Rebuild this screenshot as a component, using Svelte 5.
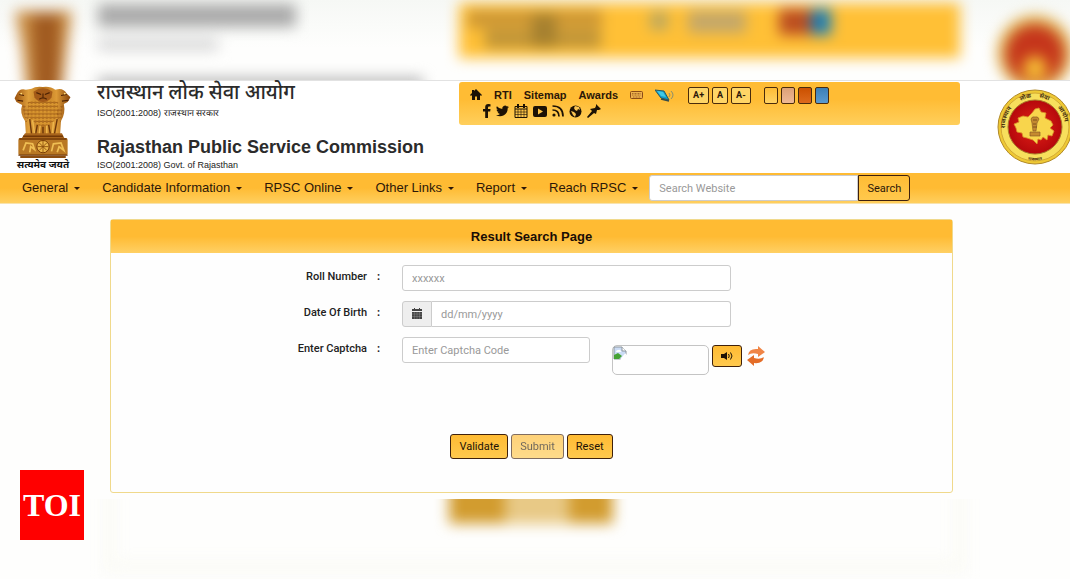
<script>
    let menu = [
        "General",
        "Candidate Information",
        "RPSC Online",
        "Other Links",
        "Report",
        "Reach RPSC",
    ];
    let colores = [
        { nombre: "Yellow", clase: "amarillo" },
        { nombre: "Peach", clase: "durazno" },
        { nombre: "Orange", clase: "naranja" },
        { nombre: "Blue", clase: "azul" },
    ];
    let rollo = "";
    let fecha = "";
    let captcha = "";
    let buscar = "";

    function limpiar() {
        rollo = "";
        fecha = "";
        captcha = "";
    }
</script>

<div class="pagina">
    <!-- blurred band over the page -->
    <svg class="banda" viewBox="0 0 1070 80" preserveAspectRatio="xMidYMin slice" aria-hidden="true">
        <defs>
            <filter id="suave" x="-30%" y="-60%" width="160%" height="220%" color-interpolation-filters="sRGB">
                <feGaussianBlur stdDeviation="7" />
            </filter>
            <linearGradient id="cielo" x1="0" y1="0" x2="0" y2="1">
                <stop offset="0" stop-color="#f6f8f5" />
                <stop offset="0.6" stop-color="#fefefd" />
            </linearGradient>
        </defs>
        <rect width="1070" height="80" fill="url(#cielo)" />
        <g filter="url(#suave)">
            <path d="M15 11H72L67 50L61 100H27L22 50Z" fill="#c98d43" />
            <path d="M32 14H60L58 100H36Z" fill="#a05a20" />
            <rect x="98" y="4" width="198" height="23" fill="#aaa" />
            <rect x="98" y="38" width="120" height="13" fill="#dadada" />
            <rect x="98" y="77" width="325" height="14" fill="#bcbcbc" />
            <rect x="459" y="3" width="501" height="55" fill="#ffc036" />
            <rect x="468" y="10" width="134" height="18" fill="#cd9735" />
            <rect x="485" y="30" width="116" height="18" fill="#bf9438" />
            <rect x="532" y="14" width="24" height="34" fill="#a5802f" />
            <rect x="650" y="12" width="18" height="18" fill="#bba860" />
            <rect x="688" y="11" width="58" height="22" fill="#c4a86a" />
            <rect x="779" y="9" width="32" height="26" fill="#bb4d20" />
            <rect x="811" y="9" width="20" height="26" fill="#1c7fb5" />
            <circle cx="1035" cy="53" r="38" fill="#dfb04b" />
            <circle cx="1035" cy="54" r="29" fill="#c5351b" />
            <circle cx="1035" cy="68" r="12" fill="#f5bd35" />
        </g>
    </svg>

    <header>
        <div class="escudo">
            <svg viewBox="0 0 60 76" width="58" height="72" aria-label="State emblem" role="img">
                <defs>
                    <linearGradient id="bronce" x1="0" y1="0" x2="1" y2="0">
                        <stop offset="0" stop-color="#99500d" />
                        <stop offset="0.25" stop-color="#e0a03b" />
                        <stop offset="0.5" stop-color="#b8741f" />
                        <stop offset="0.75" stop-color="#dd9a36" />
                        <stop offset="1" stop-color="#85430b" />
                    </linearGradient>
                    <pattern id="melena" width="4" height="4" patternUnits="userSpaceOnUse">
                        <path d="M0 1Q2 4 4 1M2 0V2" fill="none" stroke="#8a480f" stroke-width="0.7" />
                    </pattern>
                </defs>
                <path d="M2 9Q5 2 12 4L18 3Q22 0 30 1Q38 0 43 4Q51 1 55 8L59 12L56 17L52 19Q54 29 49 37L48 52H12L11 37Q5 28 8 20L2 17L0 13Z" fill="url(#bronce)" />
                <path d="M14 17Q30 12 46 17V31Q42 39 30 43Q18 39 14 31Z" fill="#d9962f" />
                <path d="M14 17Q30 12 46 17V31Q42 39 30 43Q18 39 14 31Z" fill="url(#melena)" />
                <path d="M8 20Q14 20 16 32L12 39ZM51 20Q44 23 44 33L49 38Z" fill="url(#melena)" />
                <path d="M20 6Q30-1 40 6L39 12Q36 17 30 17T21 12Z" fill="#a35a18" />
                <path d="M23 7L28 9M37 7L32 9M30 8V12M26 14Q30 11 34 14M5 9L10 10M55 9L49 10M3 15L9 16M57 15L50 16" stroke="#4d2204" stroke-width="1.2" fill="none" />
                <circle cx="7" cy="8" r="1" fill="#ffdb78" />
                <circle cx="53" cy="8" r="1" fill="#ffdb78" />
                <path d="M16 35L18 51M24 41L22 52M30 43V52M36 41L38 52M45 35L42 51" stroke="#6d370a" stroke-width="1.5" />
                <path d="M19 36L21 50M27 42L26 51M34 42V51M41 38L40 50" stroke="#edb64c" stroke-width="1.6" />
                <path d="M11 50H50L53 56H7Z" fill="#a8641c" />
                <rect x="4" y="55" width="52" height="18" rx="2" fill="#b97824" />
                <path d="M5 56H55M4 73H56M9 53H51" stroke="#713706" stroke-width="1.5" />
                <circle cx="30" cy="64" r="6.5" fill="#edb84b" stroke="#743904" />
                <path d="M30 58V70M24 64H36M26 60L34 68M34 60L26 68" stroke="#8a4b0b" stroke-width="0.9" />
                <path d="M9 68L12 60L19 61L21 67L17 64L16 70M39 69L41 61L49 60L52 68L47 64L45 70" fill="none" stroke="#efbe53" stroke-width="1.8" />
                <path d="M6 74H54V76H6Z" fill="#8b4c10" />
            </svg>
            <span>सत्यमेव जयते</span>
        </div>
        <div class="titulos">
            <h1 class="hindi">राजस्थान लोक सेवा आयोग</h1>
            <p>ISO(2001:2008) राजस्थान सरकार</p>
            <h1>Rajasthan Public Service Commission</h1>
            <p>ISO(2001:2008) Govt. of Rajasthan</p>
        </div>
        <div class="barra">
            <div class="fila">
                <a href="#inicio" aria-label="Home">
                    <svg viewBox="0 0 12 12" width="12" height="12"><path d="M6 0L12 6L11 7L10 6V11H7V7.5H5V11H2V6L1 7L0 6L2 4V1H4V2Z" /></svg>
                </a>
                <a href="#rti">RTI</a>
                <a href="#sitemap">Sitemap</a>
                <a href="#awards">Awards</a>
                <a href="#teclado" aria-label="Keyboard">
                    <svg viewBox="0 0 13 8" width="13" height="8">
                        <rect x="0.5" y="0.5" width="12" height="7" rx="1" fill="#eeb04c" stroke="#8b4b16" />
                        <path d="M2 2.5H11M2 4H11M3 6H10" stroke="#965a20" stroke-dasharray="1 0.5" stroke-width="0.8" />
                    </svg>
                </a>
                <a href="#lector" aria-label="Screen reader">
                    <svg viewBox="0 0 20 13" width="20" height="13">
                        <path d="M0 1L9 2L14 11L6 9Z" fill="#129fca" stroke="#285963" />
                        <path d="M2 2L8 3L11 8L6 7Z" fill="#41c9e6" />
                        <path d="M6 10L14 12" stroke="#344b4b" stroke-width="1.5" />
                        <path d="M14 4Q16 6 14 8M16 2Q20 6 16 10" fill="none" stroke="#8b8f6e" />
                    </svg>
                </a>
                <div class="letras">
                    <button>A+</button>
                    <button>A</button>
                    <button>A-</button>
                </div>
                <div class="muestras">
                    {#each colores as color}
                        <button class={color.clase} aria-label={color.nombre}></button>
                    {/each}
                </div>
            </div>
            <div class="fila redes">
                <a href="#facebook" aria-label="Facebook">
                    <svg viewBox="0 0 8 14" width="8" height="14"><path d="M7.5 0.2V2.5H6Q5 2.5 5 3.5V5H7.5L7.2 7.5H5V14H2.2V7.5H0V5H2.2V3Q2.2 0 5.3 0Z" /></svg>
                </a>
                <a href="#twitter" aria-label="Twitter">
                    <svg viewBox="0 0 24 20" width="13" height="12"><path d="M24 2.4a10 10 0 0 1-2.8.8A5 5 0 0 0 23.3.5a10 10 0 0 1-3.1 1.2 4.9 4.9 0 0 0-8.4 4.5A14 14 0 0 1 1.7 1a4.9 4.9 0 0 0 1.5 6.6 5 5 0 0 1-2.2-.6 4.9 4.9 0 0 0 3.9 4.9 5 5 0 0 1-2.2.1 4.9 4.9 0 0 0 4.6 3.4A10 10 0 0 1 0 17.5 14 14 0 0 0 21.5 5 10 10 0 0 0 24 2.4Z" /></svg>
                </a>
                <a href="#calendario" aria-label="Calendar">
                    <svg viewBox="0 0 14 14" width="14" height="14"><path d="M1 2.5H13V13.5H1ZM1 5H13" fill="none" stroke="#1d1205" /><path d="M1 8H13M1 10.5H13M4 5V13M7 5V13M10 5V13" stroke="#1d1205" stroke-width="0.6" /><path d="M3 0H5V4H3ZM9 0H11V4H9Z" /></svg>
                </a>
                <a href="#youtube" aria-label="YouTube">
                    <svg viewBox="0 0 14 11" width="14" height="11"><path fill-rule="evenodd" d="M2 0H12Q14 0 14 2V9Q14 11 12 11H2Q0 11 0 9V2Q0 0 2 0ZM5 2.5V8.5L10 5.5Z" /></svg>
                </a>
                <a href="#rss" aria-label="RSS">
                    <svg viewBox="0 0 12 12" width="12" height="12"><circle cx="2" cy="10" r="1.6" /><path d="M0.5 5Q7 5 7 11.5M0.5 1Q11 1 11 11.5" fill="none" stroke="#1d1205" stroke-width="1.7" /></svg>
                </a>
                <a href="#mundo" aria-label="Website">
                    <svg viewBox="0 0 13 13" width="13" height="13"><circle cx="6.5" cy="6.5" r="6" /><path d="M6 1L10 2L11 5L9 4L8 6L6 5L5 3ZM2 6L5 7L7 9L6 12L4 10Z" fill="#f9c453" /></svg>
                </a>
                <a href="#fijar" aria-label="Pin">
                    <svg viewBox="0 0 14 14" width="14" height="14"><path d="M9 0L14 5L12 6L10 6L9 10L7 9L1 14L0 13L5 7L3 5L8 4L9 2Z" /></svg>
                </a>
            </div>
        </div>
        <svg class="sello" viewBox="0 0 76 76" width="76" height="76" role="img" aria-label="Rajasthan Public Service Commission seal">
            <defs>
                <radialGradient id="rojo"><stop offset="0" stop-color="#e32118" /><stop offset="1" stop-color="#b5080b" /></radialGradient>
                <path id="arco" d="M9 46A30 30 0 1 1 67 46" />
                <path id="base" d="M20 66Q38 77 56 66" />
            </defs>
            <circle cx="38" cy="38" r="37" fill="#efc934" stroke="#b18a2a" />
            <circle cx="38" cy="38" r="34" fill="#f7df5c" stroke="#d3aa35" />
            <circle cx="38" cy="38" r="27" fill="url(#rojo)" stroke="#a8782a" />
            <text class="lema"><textPath href="#arco" startOffset="7">राजस्थान</textPath></text>
            <text class="lema"><textPath href="#arco" startOffset="40">लोक</textPath></text>
            <text class="lema"><textPath href="#arco" startOffset="59">सेवा</textPath></text>
            <text class="lema"><textPath href="#arco" startOffset="80">आयोग</textPath></text>
            <text class="lema chico"><textPath href="#base" startOffset="12">राजस्थान</textPath></text>
            <path d="M17 35L22 33L21 29L26 27L31 28L35 24L38 20L42 19L44 23L49 24L48 29L54 32L56 36L53 39L57 42L55 47L51 46L50 51L46 48L44 51L41 50L40 55L36 51L30 49L26 48L25 44L20 43L19 39Z" fill="#f8d54c" stroke="#d9902a" stroke-width="0.8" />
            <path d="M34 30Q35 27 38 28Q41 27 42 30L40 34L39 42H36L35 34ZM33 43H43V47H33Z" fill="#c48a30" stroke="#805022" stroke-width="0.6" />
            <path d="M36 31H40M36 35H39M36 38H40" stroke="#704416" stroke-width="0.8" />
        </svg>
    </header>

    <nav>
        {#each menu as item}
            <a href="#{item}">{item}<i class="flecha"></i></a>
        {/each}
        <form class="buscador" on:submit|preventDefault>
            <input type="text" placeholder="Search Website" aria-label="Search Website" bind:value={buscar} />
            <button>Search</button>
        </form>
    </nav>

    <main>
        <section class="panel">
            <h2>Result Search Page</h2>
            <form on:submit|preventDefault>
                <div class="campo">
                    <label for="rollo">Roll Number</label>
                    <b>:</b>
                    <input id="rollo" type="text" placeholder="xxxxxx" bind:value={rollo} />
                </div>
                <div class="campo">
                    <label for="fecha">Date Of Birth</label>
                    <b>:</b>
                    <div class="grupo">
                        <span class="icono">
                            <svg viewBox="0 0 12 12" width="12" height="12"><path d="M1 1H3V0H4V1H8V0H9V1H11V3H1ZM1 4H11V11H1Z" /><path d="M1 6H11M1 8.5H11M3.5 4V11M6 4V11M8.5 4V11" stroke="#aaa" stroke-width="0.3" /></svg>
                        </span>
                        <input id="fecha" type="text" placeholder="dd/mm/yyyy" bind:value={fecha} />
                    </div>
                </div>
                <div class="campo">
                    <label for="captcha">Enter Captcha</label>
                    <b>:</b>
                    <div class="verificar">
                        <input id="captcha" type="text" placeholder="Enter Captcha Code" bind:value={captcha} />
                        <div class="imagen">
                            <svg viewBox="0 0 14 14" width="14" height="14">
                                <path d="M1 1H9L13 5V9L9 13H1Z" fill="#cbdcf5" stroke="#8d969d" />
                                <path d="M3 6Q3 4 5 4Q8 3 8 6Z" fill="#fff" />
                                <path d="M1 13V9L5 7L9 10L6 13Z" fill="#46a235" />
                                <path d="M9 1V5H13" fill="#fff" stroke="#8d969d" />
                                <path d="M13 8L8 14" stroke="#fff" stroke-width="2" />
                            </svg>
                        </div>
                        <button type="button" class="btn audio" aria-label="Play captcha">
                            <svg viewBox="0 0 12 8" width="12" height="8"><path d="M0 2H3L6 0V8L3 6H0Z" /><path d="M7.5 2Q9 4 7.5 6M9.5 0.5Q12.5 4 9.5 7.5" fill="none" stroke="#1d1205" /></svg>
                        </button>
                        <button type="button" class="recargar" aria-label="Reload captcha">
                            <svg viewBox="0 0 18 20" width="18" height="20">
                                <path d="M1 9Q2 2 11 3V0L18 6L11 11V8Q5 6 1 9Z" fill="#f08546" />
                                <path d="M17 11Q16 18 7 17V20L0 14L7 9V12Q13 14 17 11Z" fill="#e46d28" />
                            </svg>
                        </button>
                    </div>
                </div>
                <div class="acciones">
                    <button type="button" class="btn">Validate</button>
                    <button class="btn" disabled>Submit</button>
                    <button type="button" class="btn" on:click={limpiar}>Reset</button>
                </div>
            </form>
        </section>
    </main>

    <!-- blurred band under the page -->
    <svg class="banda" viewBox="0 0 1070 80" preserveAspectRatio="xMidYMin slice" aria-hidden="true">
        <rect width="1070" height="80" fill="#fefefd" />
        <g filter="url(#suave)">
            <path d="M110-20V68H960V-20" fill="none" stroke="#fbfbf6" stroke-width="14" />
            <rect x="449" y="-20" width="164" height="45" fill="#e8c986" />
            <rect x="449" y="-20" width="56" height="44" fill="#d29c2f" />
            <rect x="569" y="-20" width="44" height="44" fill="#d29c2f" />
        </g>
    </svg>

    <div class="toi">TOI</div>
</div>

<style>
    :global(body) {
        background: #fefefd;
    }
    .pagina {
        position: relative;
        overflow: hidden;
        font-family: "Liberation Sans", Arial, sans-serif;
        color: #222;
    }
    .pagina * {
        box-sizing: border-box;
    }
    svg {
        display: block;
        flex: none;
    }
    a {
        color: #2c1708;
        text-decoration: none;
    }
    h1,
    h2,
    p {
        margin: 0;
    }
    button,
    input {
        margin: 0;
        font-family: Roboto, "Liberation Sans", sans-serif;
        font-size: 11px;
    }
    input {
        min-width: 0;
        height: 26px;
        padding: 0 9px;
        border: 1px solid #ccc;
        border-radius: 3px;
        background: #fff;
        color: #555;
    }
    input::placeholder {
        color: #999;
        opacity: 1;
    }
    .banda {
        width: 100%;
        height: 80px;
    }

    header {
        display: flex;
        align-items: flex-start;
        height: 93px;
        border-top: 1px solid #e2e2e2;
        background: #fff;
    }
    .escudo {
        display: flex;
        flex-direction: column;
        align-items: center;
        flex: none;
        width: 86px;
        padding-top: 5px;
    }
    .escudo span {
        font-family: "Noto Sans Devanagari", "Noto Sans", sans-serif;
        font-size: 10px;
        font-weight: bold;
        line-height: 16px;
        white-space: nowrap;
        color: #111;
    }
    .titulos {
        flex: none;
        width: 362px;
        margin-left: 11px;
    }
    .titulos h1 {
        padding-top: 16px;
        font-size: 18px;
        line-height: 20px;
        color: #2b2b2b;
    }
    .titulos h1.hindi {
        padding-top: 2px;
        font-family: "Noto Sans Devanagari", "Noto Sans", sans-serif;
        font-size: 20px;
        font-weight: 500;
        line-height: 22px;
    }
    .titulos p {
        font-size: 9px;
        line-height: 16px;
    }

    .barra {
        flex: 1;
        height: 43px;
        margin-top: 1px;
        padding: 4px 11px;
        border-radius: 3px;
        background: linear-gradient(#ffbc34 40%, #ffcf5c);
    }
    .fila {
        display: flex;
        align-items: center;
        height: 18px;
        font-size: 11px;
        font-weight: bold;
    }
    .fila svg {
        fill: #1d1205;
    }
    .fila > a + a {
        margin-left: 12px;
    }
    .redes {
        height: 14px;
        padding-left: 13px;
    }
    .redes > a + a {
        margin-left: 5px;
    }
    .letras,
    .muestras {
        display: flex;
        gap: 3px;
        margin-left: 13px;
    }
    .letras button {
        height: 17px;
        padding: 0 4px;
        border: 1px solid #4a2b0b;
        border-radius: 2px;
        background: #ffd566;
        font-size: 9px;
        font-weight: bold;
        color: #2c1708;
    }
    .muestras button {
        width: 14px;
        height: 17px;
        padding: 0;
        border: 1px solid #4a2b0b;
        border-radius: 2px;
    }
    .muestras .amarillo {
        background: linear-gradient(#ffbc34, #ffd365);
    }
    .muestras .durazno {
        background: linear-gradient(#dda076, #efb996);
    }
    .muestras .naranja {
        background: linear-gradient(#cb5000, #dc6a1d);
    }
    .muestras .azul {
        background: linear-gradient(#3d7fb5, #5a9bd0);
    }
    .sello {
        margin: 8px -3px 0 37px;
    }
    .lema {
        font-family: "Noto Sans Devanagari", "Noto Sans", sans-serif;
        font-size: 6px;
        font-weight: bold;
        fill: #49300c;
    }
    .lema.chico {
        font-size: 4px;
    }

    nav {
        display: flex;
        align-items: center;
        height: 31px;
        padding-left: 22px;
        border-bottom: 1px solid #f8e3ad;
        background: linear-gradient(#ffbb33 50%, #ffcf5e);
    }
    nav a {
        margin-right: 22px;
        font-size: 13px;
        line-height: 30px;
        white-space: nowrap;
    }
    .flecha {
        display: inline-block;
        margin-left: 6px;
        border: 3px solid transparent;
        border-top-color: #2c1708;
        border-bottom: 0;
        vertical-align: middle;
    }
    .buscador {
        display: flex;
        margin-left: -11px;
    }
    .buscador input {
        width: 209px;
        border-radius: 3px 0 0 3px;
    }
    .buscador button {
        width: 52px;
        height: 26px;
        padding: 0;
        border: 1px solid #3f210c;
        border-radius: 0 3px 3px 0;
        background: linear-gradient(#ffbc34, #ffc84c);
        color: #2c1708;
    }

    main {
        padding: 15px 117px 6px 110px;
    }
    .panel {
        border: 1px solid #f0d98b;
        border-radius: 3px;
        background: #fefefe;
    }
    .panel h2 {
        background: linear-gradient(#ffbb33 50%, #ffd064);
        font-size: 13px;
        line-height: 33px;
        text-align: center;
        color: #1a0d05;
    }
    .panel form {
        padding: 12px 0 33px;
    }
    .campo {
        display: grid;
        grid-template-columns: 256px 35px 329px;
        min-height: 36px;
        font-family: Roboto, "Liberation Sans", sans-serif;
        font-size: 11px;
        font-weight: 500;
        line-height: 24px;
    }
    .campo label {
        text-align: right;
    }
    .campo b {
        padding-left: 10px;
    }
    .grupo {
        display: flex;
    }
    .grupo input {
        flex: 1;
        border-left: 0;
        border-radius: 0 3px 3px 0;
    }
    .icono {
        display: flex;
        align-items: center;
        justify-content: center;
        width: 30px;
        height: 26px;
        border: 1px solid #ccc;
        border-radius: 3px 0 0 3px;
        background: #eee;
        fill: #444;
    }
    .verificar {
        display: flex;
        align-items: flex-start;
    }
    .verificar input {
        flex: none;
        width: 188px;
    }
    .imagen {
        flex: none;
        width: 97px;
        height: 30px;
        margin: 8px 3px 0 22px;
        border: 1px solid #c4c4c4;
        border-radius: 5px;
    }
    .btn {
        height: 25px;
        padding: 0 8px;
        border: 1px solid #3f210c;
        border-radius: 3px;
        background: linear-gradient(#ffbb33, #ffc94e);
        color: #1d1205;
    }
    .btn:disabled {
        opacity: 0.65;
    }
    .btn.audio {
        flex: none;
        height: 22px;
        margin-top: 8px;
        fill: #1d1205;
    }
    .recargar {
        padding: 0;
        margin: 9px 0 0 5px;
        border: 0;
        background: none;
    }
    .acciones {
        display: flex;
        justify-content: center;
        gap: 3px;
        padding-top: 59px;
    }

    .toi {
        position: absolute;
        bottom: 39px;
        left: 20px;
        width: 64px;
        background: #f00;
        font-family: "Liberation Serif", serif;
        font-size: 32px;
        font-weight: bold;
        line-height: 70px;
        text-align: center;
        color: #fff;
    }
</style>
